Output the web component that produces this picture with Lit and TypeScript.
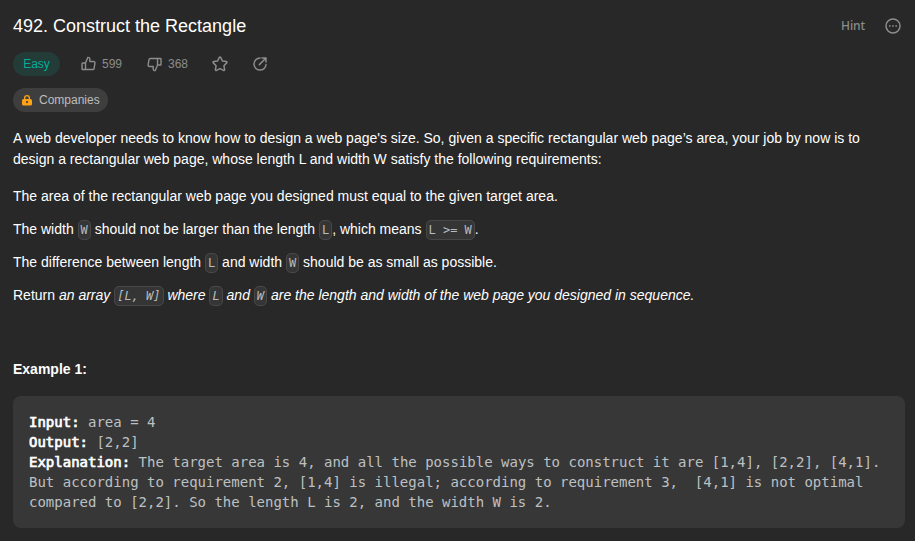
import { LitElement, html, css } from "lit";
import { customElement } from "lit/decorators.js";

@customElement("app-root")
export class AppRoot extends LitElement {
  static styles = css`
    :host {
      display: block;
      box-sizing: border-box;
      height: 541px;
      overflow: hidden;
      padding: 14px 10px 0 13px;
      background: #282828;
      color: #fff;
      font: 14px/21px "Liberation Sans", Arial, sans-serif;
    }
    svg { display: block; fill: none; stroke: #8c8c8c; stroke-width: 1.5; stroke-linecap: round; stroke-linejoin: round; }
    header { display: flex; align-items: center; height: 24px; }
    h1 { flex: 1; margin: 0; font-size: 18px; line-height: 24px; font-weight: 400; }
    .hint { color: #8c8c8c; font: 500 12px/24px "Noto Sans", sans-serif; letter-spacing: -0.1px; margin-right: 20px; }
    .more { margin-right: 4px; }
    .stats { display: flex; align-items: center; height: 24px; margin-top: 14px; font-size: 12px; color: #8c8c8c; }
    .easy { box-sizing: border-box; width: 47px; height: 24px; border-radius: 12px; background: #233c38; color: #00af9b; line-height: 24px; text-align: center; }
    .stat { display: flex; align-items: center; gap: 5px; line-height: 24px; }
    .up { margin-left: 21px; width: 66px; }
    .down { width: 65px; }
    .star { width: 40px; }
    .companies { display: flex; align-items: center; box-sizing: border-box; width: 95px; height: 24px; margin-top: 12px; padding-left: 9px; gap: 7px; border-radius: 12px; background: #3e3e3e; color: #bdbdbd; font-size: 12px; }
    .lock { fill: #ffa116; stroke: none; }
    .body { margin-top: 16px; }
    p { margin: 0 0 16px; }
    .intro { padding-right: 16px; }
    li { margin-bottom: 12px; }
    ul { list-style: none; margin: 0; padding: 0; }
    code { font: 12px/18px "DejaVu Sans Mono", monospace; font-style: inherit; padding: 2px; border: 1px solid #484848; border-radius: 5px; background: #353535; color: #b9bcbf; }
    pre { margin: 0; padding: 16px; border-radius: 8px; background: #373737; color: #bdc0c3; font: 14px/20px "DejaVu Sans Mono", monospace; }
    pre b { color: #fff; font-weight: 400; -webkit-text-stroke: 0.7px #fff; }
  `;

  render() {
    return html`
      <header>
        <h1>492. Construct the Rectangle</h1>
        <span class="hint">Hint</span>
        <svg class="more" width="16" height="16" viewBox="0 0 16 16"><circle cx="8" cy="8" r="7" /><path stroke-linecap="butt" d="M4 8h1.6M7.2 8h1.6M10.4 8H12" /></svg>
      </header>
      <div class="stats">
        <span class="easy">Easy</span>
        <span class="stat up">
          <svg width="16" height="16" viewBox="0 0 17 17"><path d="M1.800 7.400h3v7h-3a.7.7 0 0 1-.7-.7V8.100a.7.7 0 0 1 .7-.7ZM4.800 7.400 7.200 1.500c1.300-.2 2.200.6 2.200 1.700v2.600h3.900c1 0 1.700.8 1.500 1.800l-.9 5.500c-.1.8-.7 1.300-1.500 1.300H4.800" /></svg>599
        </span>
        <span class="stat down">
          <svg width="16" height="16" viewBox="0 0 17 17"><path d="M14.200 9.600h-3v-7h3c.4 0 .7.3.7.7v5.600c0 .4-.3.7-.7.7ZM11.200 9.600l-2.400 5.900c-1.300.2-2.200-.6-2.200-1.700v-2.600H2.700c-1 0-1.700-.8-1.500-1.800l.9-5.500c.1-.8.7-1.300 1.500-1.300h7.600" /></svg>368
        </span>
        <span class="star">
          <svg width="16" height="16" viewBox="0 0 16 16"><path d="M7.300 1.400a.8.8 0 0 1 1.400 0l1.700 3.600 3.900.6c.6.1.9.8.4 1.300l-2.800 2.800.7 3.900c.1.7-.6 1.100-1.100.8L8 12.600l-3.500 1.800c-.6.3-1.200-.1-1.100-.8l.7-3.900-2.800-2.800c-.5-.5-.2-1.200.4-1.300L5.600 5Z" /></svg>
        </span>
        <svg width="16" height="16" viewBox="0 0 16 16"><path d="M8 2.100a6 6 0 1 0 6 6.400M7.400 8.600l6.300-6.300M10 2h4v4" /></svg>
      </div>
      <div class="companies">
        <svg class="lock" width="10" height="11" viewBox="0 0 10 11"><path fill-rule="evenodd" d="M2 4V3a3 3 0 0 1 6 0v1h.5A1.500 1.500 0 0 1 10 5.500V9a1.500 1.500 0 0 1-1.500 1.500h-7A1.500 1.500 0 0 1 0 9V5.500A1.500 1.500 0 0 1 1.500 4ZM3.300 4h3.400V3a1.700 1.700 0 0 0-3.400 0ZM5 6a1.100 1.100 0 1 0 0 2.200A1.100 1.100 0 0 0 5 6Z" /></svg>
        Companies
      </div>
      <div class="body">
        <p class="intro">A web developer needs to know how to design a web page's size. So, given a specific rectangular web page’s area, your job by now is to design a rectangular web page, whose length L and width W satisfy the following requirements:</p>
        <ul>
          <li>The area of the rectangular web page you designed must equal to the given target area.</li>
          <li>The width <code>W</code> should not be larger than the length <code>L</code>, which means <code>L &gt;= W</code>.</li>
          <li>The difference between length <code>L</code> and width <code>W</code> should be as small as possible.</li>
        </ul>
        <p>Return <em>an array <code>[L, W]</code> where <code>L</code> and <code>W</code> are the length and width of the web page you designed in sequence.</em></p>
        <p>&nbsp;</p>
        <p><b>Example 1:</b></p>
        <pre><b>Input:</b> area = 4
<b>Output:</b> [2,2]
<b>Explanation:</b> The target area is 4, and all the possible ways to construct it are [1,4], [2,2], [4,1].
But according to requirement 2, [1,4] is illegal; according to requirement 3,  [4,1] is not optimal
compared to [2,2]. So the length L is 2, and the width W is 2.
</pre>
      </div>
    `;
  }
}
